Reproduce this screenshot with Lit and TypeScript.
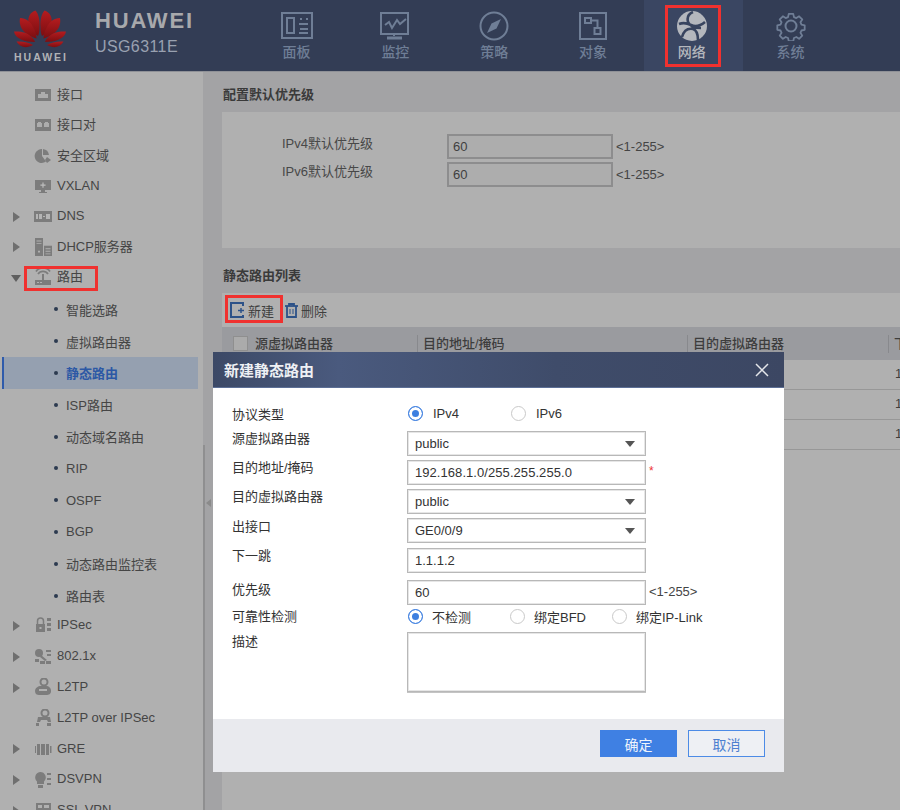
import { LitElement, html, css, svg } from "lit";
import { customElement } from "lit/decorators.js";

const petalPaths = [
  "M38 36 C30 31 26 22 29.500 15.500 C30.500 13 33 11.500 35.500 10.500 C38.500 14 40 20 39.500 27 C39.500 31 39 34 38 36Z",
  "M36.500 38.500 C27 36 18 29 20 18 C26 18 31 22 33 27 C35.500 31 36.500 35 36.500 38.500Z",
  "M35 42 C25 42 15 39 14 31.500 C21 31 28 33 31 36.500 C33 38 34.500 40 35 42Z",
  "M33 45 C27 48.500 20 48 16.500 41.500 C23 41 29 42.500 33 45Z",
];
const logo = html`<svg class="logo" viewBox="0 0 80 50" width="80" height="50">
  <defs><linearGradient id="pet" x1="0" y1="0" x2="0" y2="1"><stop offset="0" stop-color="#b51c1f"/><stop offset="1" stop-color="#7b0e11"/></linearGradient></defs>
  ${petalPaths.map((d) => svg`<path d="${d}" fill="url(#pet)"/><path d="${d}" fill="url(#pet)" transform="translate(80 0) scale(-1 1)"/>`)}
</svg>`;

const navIcons: Record<string, unknown> = {
  board: svg`<svg viewBox="0 0 32 28" width="32" height="28" fill="none" stroke="currentColor" stroke-width="2"><rect x="1" y="1" width="30" height="25"/><rect x="6" y="6" width="7" height="15"/><path d="M19 7h2M25 7h2M18 12h9M19 17h8M18 21h9"/></svg>`,
  monitor: svg`<svg viewBox="0 0 30 28" width="30" height="28" fill="none" stroke="currentColor" stroke-width="2"><path d="M1 1h27v21H1z"/><path d="M5 13l4-3 3 6 5-8 3 4 6-5" stroke-width="2"/><path d="M14 22v2" /><path d="M7 26h15" stroke-width="3"/></svg>`,
  compass: svg`<svg viewBox="0 0 30 30" width="30" height="30" fill="none" stroke="currentColor" stroke-width="2"><circle cx="15" cy="15" r="13.500"/><path d="M22 8l-4.500 9.500L8 22l4.500-9.500z" fill="currentColor" stroke="none"/></svg>`,
  object: svg`<svg viewBox="0 0 28 28" width="28" height="28" fill="none" stroke="currentColor" stroke-width="2"><rect x="1" y="1" width="26" height="26"/><rect x="6" y="6" width="6" height="5"/><rect x="15.500" y="16" width="6" height="6"/><path d="M12 8.500h6.500V16"/></svg>`,
  network: svg`<svg viewBox="0 0 30 30" width="30" height="30"><circle cx="15" cy="15" r="15" fill="currentColor"/><path d="M2 13c5-2 8-1 12 1 4 2 8 2 14-3M16 1c-5 2-6 6-5 10 2 5 8 6 13 6M5 26c2-7 6-9 11-8 3 1 5 3 5 11" fill="none" stroke="#38445f" stroke-width="2.600"/></svg>`,
  gear: svg`<svg viewBox="0 0 30 30" width="30" height="30" fill="none" stroke="currentColor" stroke-width="2"><path d="M12.500 1.500h5l.8 3.600 2.600 1.100 3.100-2 3.500 3.500-2 3.100 1.100 2.600 3.600.8v5l-3.600.8-1.100 2.600 2 3.100-3.500 3.500-3.100-2-2.600 1.100-.8 3.600h-5l-.8-3.600-2.600-1.100-3.100 2-3.500-3.500 2-3.100-1.100-2.600-3.600-.8v-5l3.600-.8 1.100-2.600-2-3.100 3.500-3.500 3.100 2 2.600-1.100z" transform="translate(1.500 1.500) scale(.9)" stroke-linejoin="round"/><circle cx="15" cy="15" r="5.500"/></svg>`,
};

const nav = [
  ["面板", "board"], ["监控", "monitor"], ["策略", "compass"], ["对象", "object"], ["网络", "network"], ["系统", "gear"],
];

const I = (body: unknown, w = 18, h = 16, rw = w, rh = h) => svg`<svg viewBox="0 0 ${w} ${h}" width="${rw}" height="${rh}" preserveAspectRatio="none" fill="#7c7c7c">${body}</svg>`;
const sideIcons: Record<string, unknown> = {
  port: I(svg`<path d="M1 2h16v12H1z"/><path d="M4 11V7h3V5h4v2h3v4z" fill="#adadad"/>`),
  pair: I(svg`<path d="M1 2h16v12H1z"/><path d="M3 10V6h1V5h3v1h1v4zM10 10V6h1V5h3v1h1v4z" fill="#adadad"/>`),
  zone: I(svg`<path d="M8 1a7 7 0 1 0 4 12.500L8 8z"/><path d="M9 1a7 7 0 0 1 6 6H9z"/><path d="M13 9l4 3-4 3-2-3z"/>`),
  vxlan: I(svg`<path d="M1 2h16v10H1zM7 12h4v2h2v1H5v-1h2z"/><path d="M8.400 4.500h1.200v2h2v1.200h-2v2H8.400v-2h-2V6.500h2z" fill="#bdbdbd"/>`),
  dns: I(svg`<path d="M0 3h18v11H0z"/><path d="M2 6h2v5H2zM5 6h3v5H5zM9 8h2v1H9zM12 6h4v5h-4z" fill="#b4b4b4"/>`),
  dhcp: I(svg`<path d="M1 0h8v21H1z"/><path d="M10 9h8v12h-8z"/><path d="M2.500 3h5v1h-5zM2.500 6h5v1h-5zM11.500 12h5v1h-5zM11.500 15h5v1h-5zM11.500 18h5v1h-5zM4 15h2v2H4z" fill="#b0b0b0"/>`, 18, 21, 18, 18),
  route: I(svg`<path d="M1 12h16v5H1z"/><path d="M8 6h2v6H8z"/><path d="M4 6a6 6 0 0 1 10 0M2 3.500a8.500 8.500 0 0 1 14 0" fill="none" stroke="#7c7c7c" stroke-width="1.700"/><path d="M3 14h2v1H3zM6 14h2v1H6z" fill="#b0b0b0"/>`, 18, 18),
  ipsec: I(svg`<path d="M2 7h9v8H2z"/><path d="M3.500 7V4a3 3 0 0 1 6 0v3" fill="none" stroke="#7c7c7c" stroke-width="1.500"/><path d="M13 1h4v3h-4zM13 6h4v3h-4zM13 11h4v3h-4z"/><path d="M5.500 10h2v2h-2z" fill="#b0b0b0"/>`),
  dot1x: I(svg`<circle cx="5" cy="5" r="4"/><path d="M7 7l6 5-2 1-5-4zM12 2h5v2h-5zM13 6h4v2h-4zM1 11h4v3H1zM6 13h5v3H6zM12 13h5v3h-5z"/>`, 18, 17),
  l2tp: I(svg`<circle cx="10" cy="4" r="3.500" fill="none" stroke="#7c7c7c" stroke-width="2"/><path d="M1 13c0-3 3-5 6-5h5c3 0 5 2 5 5s-2 4-5 4H5c-2 0-4-1-4-4z"/><path d="M5 11h8v2H5z" fill="#b0b0b0"/>`, 18, 18),
  l2tpip: I(svg`<circle cx="10" cy="4" r="3.500" fill="none" stroke="#7c7c7c" stroke-width="2"/><path d="M3 8h12l1 5h-3l-1-2H6l-1 2H2z"/><path d="M1 14h3v3H1zM12 14h4v3h-4z"/>`, 17, 18),
  gre: I(svg`<path d="M3 3h12v11H3zM1 5h1v7H1zM16 5h1.500v7H16z"/><path d="M6 3h1v11H6zM11 3h1v11h-1z" fill="#b0b0b0"/>`),
  dsvpn: I(svg`<path d="M6 1a5.500 5.500 0 0 1 4 9.500V13H3v-2.500A5.500 5.500 0 0 1 6 1zM4 14h5v3H4z"/><path d="M13 2h4v2h-4zM13 7h4v2h-4zM13 12h4v2h-4z"/>`, 18, 17),
  ssl: I(svg`<path d="M2 1h15v15H2z"/><path d="M4 3h4v3H4zM10 3h5v3h-5zM4 8h11v6H4z" fill="#b0b0b0"/>`, 18, 16),
};

type Row = { t: string; icon?: string; arrow?: "r" | "d"; box?: boolean };
const groupA: Row[] = [
  { t: "接口", icon: "port" }, { t: "接口对", icon: "pair" }, { t: "安全区域", icon: "zone" },
  { t: "VXLAN", icon: "vxlan" }, { t: "DNS", icon: "dns", arrow: "r" }, { t: "DHCP服务器", icon: "dhcp", arrow: "r" },
  { t: "路由", icon: "route", arrow: "d", box: true },
];
const subs = ["智能选路", "虚拟路由器", "静态路由", "ISP路由", "动态域名路由", "RIP", "OSPF", "BGP", "动态路由监控表", "路由表"];
const groupB: Row[] = [
  { t: "IPSec", icon: "ipsec", arrow: "r" }, { t: "802.1x", icon: "dot1x", arrow: "r" }, { t: "L2TP", icon: "l2tp", arrow: "r" },
  { t: "L2TP over IPSec", icon: "l2tpip" }, { t: "GRE", icon: "gre", arrow: "r" }, { t: "DSVPN", icon: "dsvpn", arrow: "r" },
  { t: "SSL VPN", icon: "ssl", arrow: "r" },
];

const closeIcon = svg`<svg viewBox="0 0 14 14" width="14" height="14" fill="none" stroke="#e4e6ea" stroke-width="1.500"><path d="M1 1l12 12M13 1L1 13"/></svg>`;
const newIcon = svg`<svg viewBox="0 0 15 16" width="15" height="16" fill="none" stroke="#2d5288" stroke-width="2"><path d="M13 4V1H1v14h12v-2"/><path d="M8 8.500h6M11 6v5" stroke-width="1.500"/></svg>`;
const delIcon = svg`<svg viewBox="0 0 13 15" width="13" height="15" fill="none" stroke="#2d5288" stroke-width="1.800"><path d="M0 3h13" /><path d="M4 3V1h5v2M2 3v11h9V3"/><path d="M5 6v5M8 6v5" stroke-width="1"/></svg>`;

@customElement("app-root")
export class AppRoot extends LitElement {
  static styles = css`
    :host { display: block; width: 900px; height: 810px; overflow: hidden; position: relative;
      font: 13px "Liberation Sans", "Noto Sans CJK SC", sans-serif; color: #454545; background: #a3a3a5; }
    .top { height: 72px; background: #333d55; border-bottom: 1px solid #8f9197; box-sizing: border-box; display: flex; }
    .brand { width: 247.200px; flex: none; display: flex; }
    .logoBox { width: 80px; flex: none; }
    .logo { display: block; }
    .logoText { font-size: 10.500px; font-weight: 700; color: #b0b2b6; letter-spacing: 2px; line-height: 12px; margin: 1px 0 0 14px; white-space: nowrap; }
    .brandText { padding: 9px 0 0 15px; }
    .bt1 { font-size: 22px; font-weight: 700; color: #a8a9ac; letter-spacing: 1.800px; line-height: 24px; }
    .bt2 { font-size: 16px; color: #99a1b0; letter-spacing: .4px; line-height: 20px; margin-top: 4px; }
    .nav { display: flex; }
    .navItem { width: 98.800px; height: 71px; position: relative; display: flex; flex-direction: column; align-items: center; color: #6f7e96; font-size: 14px; font-weight: 500; }
    .navItem.on { background: linear-gradient(90deg, transparent 2px, #3a4662 2px); box-shadow: 2px 0 0 #3a4662; color: #b4b7bd; }
    .navIco { height: 30px; margin-top: 11px; display: flex; align-items: center; justify-content: center; }
    .navLbl { margin-top: 1px; line-height: 20px; }
    .redbox { position: absolute; border: 3px solid #f0312f; box-sizing: border-box; pointer-events: none; }
    .rNav { left: 23px; top: 5px; width: 56px; height: 62px; }
    .rSide { left: 24px; top: 4px; width: 74px; height: 25px; }
    .rNew { left: 3px; top: 2px; width: 58px; height: 28px; }
    .body { display: flex; height: 738px; }
    .side { width: 203px; flex: none; background: #b0b0b0; padding-top: 8px; box-sizing: border-box; overflow: hidden; }
    .row { height: 30.300px; display: flex; align-items: center; position: relative; }
    .row.b { height: 30.800px; }
    .arrow { width: 0; height: 0; position: absolute; }
    .arrow.r { left: 13px; top: 11px; border-left: 7px solid #6f6f6f; border-top: 5px solid transparent; border-bottom: 5px solid transparent; }
    .arrow.d { left: 11px; top: 13px; border-top: 7px solid #5f5f5f; border-left: 5px solid transparent; border-right: 5px solid transparent; }
    .rowIco { width: 18px; margin-left: 34px; display: flex; align-items: center; justify-content: center; flex: none; }
    .rowTxt { margin-left: 5px; white-space: nowrap; line-height: 18px; }
    .subs { margin-top: 1.400px; margin-bottom: -1.500px; }
    .sub { height: 31.800px; display: flex; align-items: center; white-space: nowrap; margin-left: 2px; width: 196px; }
    .sub::before { content: ""; width: 4px; height: 4px; border-radius: 50%; background: #2c3a50; margin-left: 52px; margin-right: 8px; flex: none; }
    .sub.on { background: #95a0b0; box-shadow: inset 2px 0 0 #2f5bab; color: #2c58a5; font-weight: 700; }
    .main { flex: 1; min-width: 0; padding-left: 19px; display: flex; flex-direction: column; position: relative; }
    .scroll { position: absolute; left: 0; top: 373px; bottom: 0; width: 2px; background: #8f8f90; }
    .gripArrow { position: absolute; left: 3px; top: 427px; border-right: 5px solid #8a8a8a; border-top: 4px solid transparent; border-bottom: 4px solid transparent; }
    h2 { margin: 0; font-size: 13px; font-weight: 700; color: #3a3a3a; line-height: 18px; margin-left: 1px; }
    .t1 { padding-top: 14px; height: 40px; box-sizing: border-box; }
    .panel { height: 136px; background: #b0b0b0; padding: 22px 0 0 60px; box-sizing: border-box; display: grid; grid-template-columns: 165px 166px auto; grid-auto-rows: 25px; row-gap: 3px; justify-content: start; }
    .pLbl { color: #484848; line-height: 20px; }
    .pIn { border: 2px solid #8d8d8e; background: #adadad; display: flex; align-items: center; padding-left: 4px; box-sizing: border-box; color: #3f3f3f; font-size: 13px; }
    .hint { font-size: 13px; color: #444; padding-left: 3px; line-height: 26px; white-space: nowrap; }
    .t2 { height: 45px; padding-top: 19px; box-sizing: border-box; }
    .listPanel { flex: 1; background: #b0b0b0; }
    .tools { height: 34px; display: flex; align-items: center; position: relative; padding-left: 8px; color: #3f3f3f; }
    .tool { display: flex; align-items: center; gap: 3px; }
    .tool + .tool { margin-left: 11px; }
    .thead, .trow { display: grid; grid-template-columns: 195px 270px 201px 1fr; }
    .thead { height: 33px; background: #9a9b9f; align-items: center; font-weight: 500; color: #3d3d3d; }
    .th { height: 18px; line-height: 18px; padding-left: 5px; border-left: 1px solid #88898d; white-space: nowrap; overflow: hidden; }
    .th.first { border: 0; padding-left: 11px; display: flex; gap: 7px; align-items: center; }
    .check { width: 13px; height: 13px; border: 1px solid #8f8f8f; background: #ababab; flex: none; }
    .trow { height: 30px; border-bottom: 1px solid #979797; align-items: center; box-sizing: border-box; color: #3d3d3d; padding-bottom: 2px; }
    .cell4 { padding-left: 7px; }
    .modal { position: absolute; left: 213px; top: 352px; width: 571px; height: 420px; background: #fff; display: flex; flex-direction: column; color: #333; }
    .mHead { height: 35px; flex: none; background: linear-gradient(90deg, #3c4966, #4a5a7e 22%, #3f4c6a 60%, #3c4763); border-bottom: 1px solid #5c6f96; display: flex; align-items: center; justify-content: space-between; padding: 0 15px 0 11px; color: #eef0f4; font-size: 15px; font-weight: 700; }
    .mHead svg { display: block; }
    .form { flex: 1; padding: 16px 0 0 19px; display: grid; grid-template-columns: 175px 239px auto; grid-template-rows: 27px 29px 29px 29px 30px 32px 26px 26px 60px; justify-content: start; align-items: start; }
    .lb { line-height: 16px; white-space: nowrap; }
    .lb.m1 { margin-top: 1px; } .lb.m2 { margin-top: 2px; } .lb.m3 { margin-top: 3px; }
    .radios { display: flex; align-items: center; height: 18px; grid-column: 2 / span 2; white-space: nowrap; }
    .radios.low { margin-top: 1px; }
    .radio { width: 15px; height: 15px; border-radius: 50%; border: 1px solid #c9c9c9; box-sizing: border-box; flex: none; margin-left: 1px; }
    .radio.on { border-color: #3d7fe0; box-shadow: inset 0 0 0 3px #fff; background: #3d7fe0; }
    .rt { margin-left: 10px; }
    .opt { display: flex; align-items: center; }
    .ipv4 { width: 103px; }
    .opt.a, .opt.b { width: 102px; }
    .opt.a .rt, .opt.b .rt, .opt.c .rt { margin-left: 9px; }
    .fld { width: 239px; height: 25px; border: 1px solid #b8b8b8; box-shadow: inset 0 0 0 1px #e6e6e6; box-sizing: border-box; display: flex; align-items: center; justify-content: space-between; padding: 0 10px 0 7px; color: #333; }
    .fld.tall { height: 60px; box-shadow: inset 0 0 0 1px #e6e6e6, 0 1px 0 #c4c4c4; }
    .caret { border-top: 6px solid #555; border-left: 5px solid transparent; border-right: 5px solid transparent; }
    .ip { letter-spacing: .06px; }
    .star { color: #e33; font-size: 12px; padding-left: 3px; line-height: 22px; }
    .fHint { font-size: 13px; padding-left: 3px; line-height: 24px; color: #444; white-space: nowrap; }
    .mFoot { height: 53px; flex: none; background: #e9eaee; display: flex; justify-content: flex-end; align-items: flex-start; gap: 11px; padding: 11px 19px 0 0; box-sizing: border-box; }
    .btn { width: 77px; height: 27px; box-sizing: border-box; display: flex; align-items: center; justify-content: center; font-size: 14px; }
    .ok { background: #3f80e3; color: #eef4fc; }
    .no { border: 1px solid #4c8be6; color: #4c7fd0; background: #eef0f4; }
  `;

  private sideRow(r: Row, b = false) {
    return html`<div class="row ${b ? "b" : ""}">
      ${r.arrow ? html`<i class="arrow ${r.arrow}"></i>` : ""}
      <span class="rowIco">${sideIcons[r.icon!]}</span>
      <span class="rowTxt">${r.t}</span>
      ${r.box ? html`<i class="redbox rSide"></i>` : ""}
    </div>`;
  }

  render() {
    return html`
      <header class="top">
        <div class="brand">
          <div class="logoBox">${logo}<div class="logoText">HUAWEI</div></div>
          <div class="brandText"><div class="bt1">HUAWEI</div><div class="bt2">USG6311E</div></div>
        </div>
        <nav class="nav">
          ${nav.map(([t, i]) => html`<div class="navItem ${t === "网络" ? "on" : ""}">
            <div class="navIco">${navIcons[i]}</div><div class="navLbl">${t}</div>
            ${t === "网络" ? html`<i class="redbox rNav"></i>` : ""}
          </div>`)}
        </nav>
      </header>
      <div class="body">
        <aside class="side">
          ${groupA.map((r) => this.sideRow(r))}
          <div class="subs">${subs.map((s) => html`<div class="sub ${s === "静态路由" ? "on" : ""}">${s}</div>`)}</div>
          ${groupB.map((r) => this.sideRow(r, true))}
        </aside>
        <main class="main">
          <i class="scroll"></i><i class="gripArrow"></i>
          <div class="t1"><h2>配置默认优先级</h2></div>
          <section class="panel">
            <div class="pLbl">IPv4默认优先级</div><div class="pIn">60</div><div class="hint">&lt;1-255&gt;</div>
            <div class="pLbl">IPv6默认优先级</div><div class="pIn">60</div><div class="hint">&lt;1-255&gt;</div>
          </section>
          <div class="t2"><h2>静态路由列表</h2></div>
          <section class="listPanel">
            <div class="tools">
              <span class="tool">${newIcon}新建</span><span class="tool">${delIcon}删除</span>
              <i class="redbox rNew"></i>
            </div>
            <div class="thead">
              <div class="th first"><i class="check"></i>源虚拟路由器</div>
              <div class="th">目的地址/掩码</div>
              <div class="th">目的虚拟路由器</div>
              <div class="th">下一跳</div>
            </div>
            ${[0, 1, 2].map(() => html`<div class="trow"><span></span><span></span><span></span><span class="cell4">1.1.1.1</span></div>`)}
          </section>
        </main>
      </div>
      <section class="modal">
        <div class="mHead"><span>新建静态路由</span>${closeIcon}</div>
        <div class="form">
          <div class="lb m3">协议类型</div>
          <div class="radios">
            <span class="opt ipv4"><i class="radio on"></i><span class="rt">IPv4</span></span>
            <span class="opt"><i class="radio"></i><span class="rt">IPv6</span></span>
          </div>
          <div class="lb">源虚拟路由器</div>
          <div class="fld">public<i class="caret"></i></div><span></span>
          <div class="lb">目的地址/掩码</div>
          <div class="fld"><span class="ip">192.168.1.0/255.255.255.0</span></div><span class="star">*</span>
          <div class="lb">目的虚拟路由器</div>
          <div class="fld">public<i class="caret"></i></div><span></span>
          <div class="lb m1">出接口</div>
          <div class="fld">GE0/0/9<i class="caret"></i></div><span></span>
          <div class="lb">下一跳</div>
          <div class="fld">1.1.1.2</div><span></span>
          <div class="lb m2">优先级</div>
          <div class="fld">60</div><span class="fHint">&lt;1-255&gt;</span>
          <div class="lb m3">可靠性检测</div>
          <div class="radios low">
            <span class="opt a"><i class="radio on"></i><span class="rt">不检测</span></span>
            <span class="opt b"><i class="radio"></i><span class="rt">绑定BFD</span></span>
            <span class="opt c"><i class="radio"></i><span class="rt">绑定IP-Link</span></span>
          </div>
          <div class="lb m2">描述</div>
          <div class="fld tall"></div><span></span>
        </div>
        <div class="mFoot"><div class="btn ok">确定</div><div class="btn no">取消</div></div>
      </section>
    `;
  }
}
